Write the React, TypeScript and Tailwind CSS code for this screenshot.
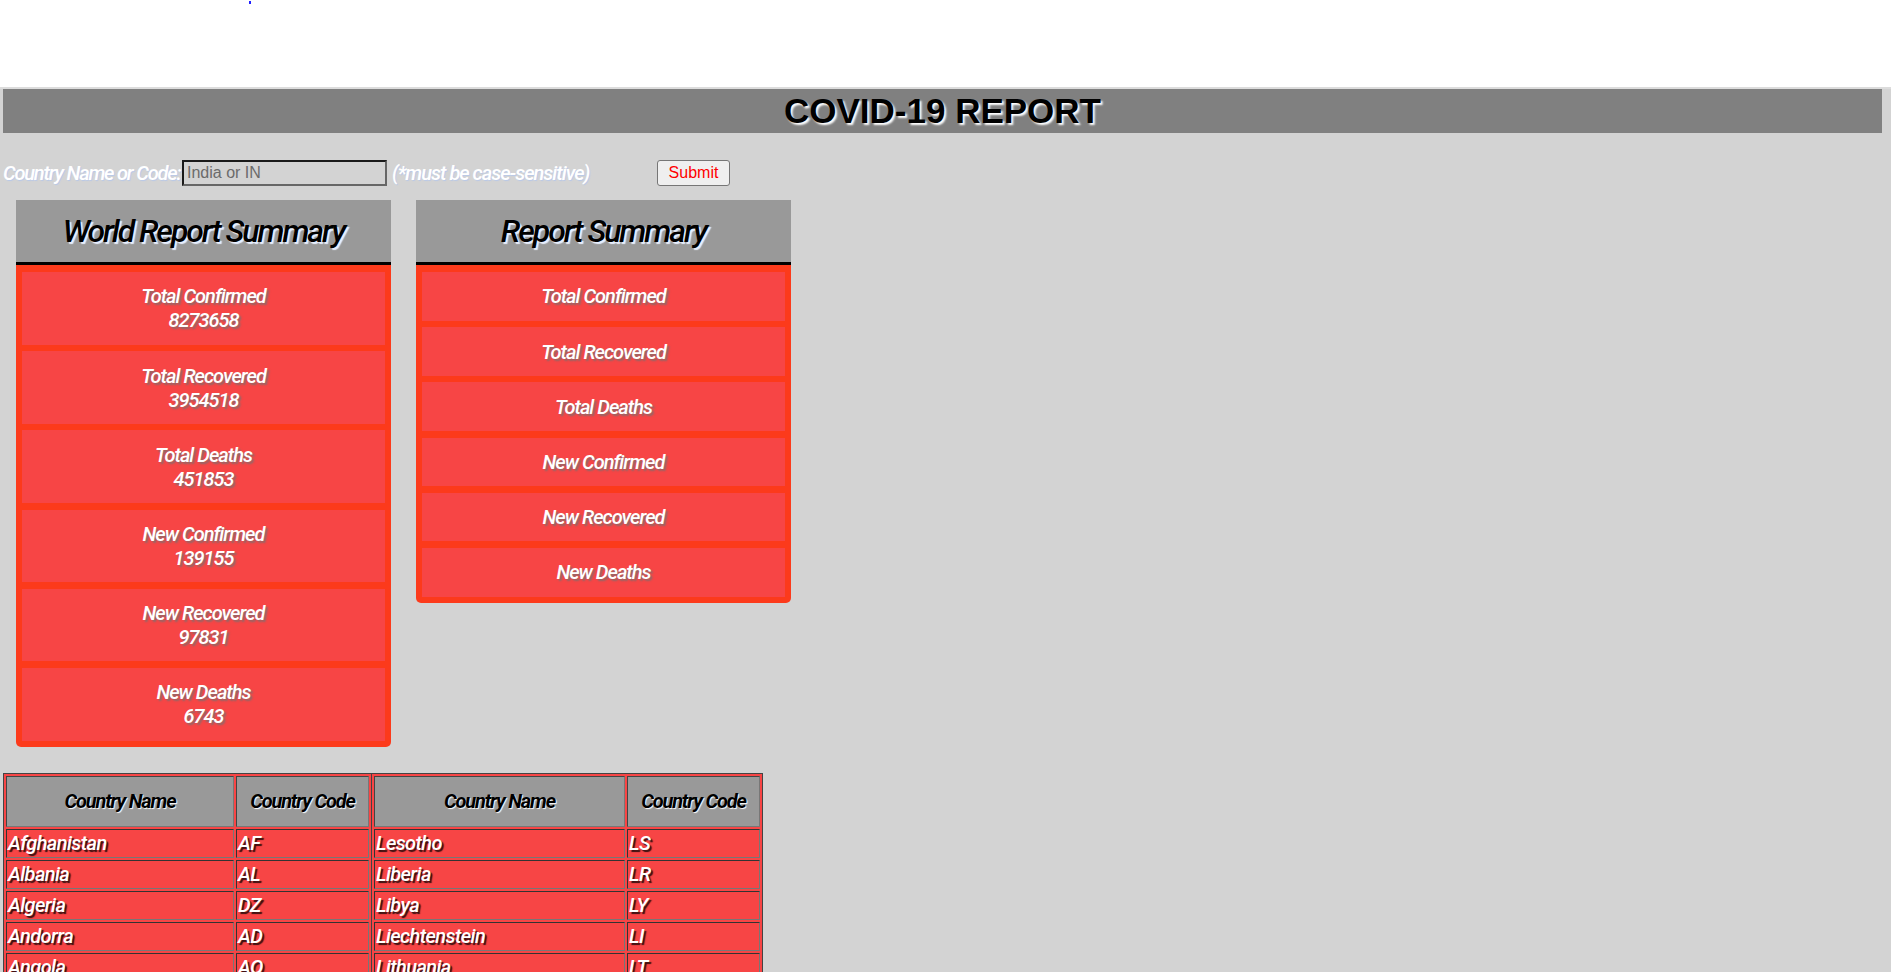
import React from 'react'

const WORLD = [
  { label: 'Total Confirmed', value: '8273658' },
  { label: 'Total Recovered', value: '3954518' },
  { label: 'Total Deaths', value: '451853' },
  { label: 'New Confirmed', value: '139155' },
  { label: 'New Recovered', value: '97831' },
  { label: 'New Deaths', value: '6743' },
]

const LEFT = [
  ['Afghanistan', 'AF'],
  ['Albania', 'AL'],
  ['Algeria', 'DZ'],
  ['Andorra', 'AD'],
  ['Angola', 'AO'],
  ['Antigua and Barbuda', 'AG'],
  ['Argentina', 'AR'],
  ['Armenia', 'AM'],
]

const RIGHT = [
  ['Lesotho', 'LS'],
  ['Liberia', 'LR'],
  ['Libya', 'LY'],
  ['Liechtenstein', 'LI'],
  ['Lithuania', 'LT'],
  ['Luxembourg', 'LU'],
  ['Macedonia', 'MK'],
  ['Madagascar', 'MG'],
]

function SummaryCard({ title, items }: { title: string; items: { label: string; value?: string }[] }) {
  return (
    <div className="w-[375px] bg-[#fc3a1b] rounded-b-[5px]">
      <div className="h-[65px] bg-[#999999] border-b-[3px] border-black flex items-center justify-center">
        <h2 className="text-[32px] italic font-medium text-black tracking-[-0.065em] [text-shadow:2px_2px_1px_#e8f0ff]">
          {title}
        </h2>
      </div>
      <div className="flex flex-col gap-[6.4px] p-[6px] pt-[7px]">
        {items.map((it) => (
          <div
            key={it.label}
            className="bg-[#f74545] py-[12.4px] text-center text-white italic font-medium text-[20px] leading-[24px] tracking-[-0.05em] [text-shadow:2px_2px_2px_#8a6a6a]"
          >
            <div>{it.label}</div>
            {it.value && <div>{it.value}</div>}
          </div>
        ))}
      </div>
    </div>
  )
}

function CountryTable({ rows, nameW, last }: { rows: string[][]; nameW: string; last?: boolean }) {
  const head =
    'h-[51px] bg-[#999999] border border-[#444] border-b-[#777] border-r-[#777] text-black italic font-bold text-[20px] tracking-[-0.06em] [text-shadow:1px_1px_1px_#ffffff]'
  const cell =
    'h-[29px] bg-[#f74545] border border-[#333] border-b-[#777] border-r-[#777] px-[1px] text-white italic font-medium text-[20px] leading-[24px] tracking-[-0.03em] [text-shadow:2px_2px_1px_#3a1010]'
  return (
    <table className={`border-separate border-spacing-[2px] ${last ? '' : 'border-r border-[#444]'}`}>
      <thead>
        <tr>
          <th className={`${nameW} ${head}`}>Country Name</th>
          <th className={`w-[133px] ${head}`}>Country Code</th>
        </tr>
      </thead>
      <tbody>
        {rows.map(([name, code]) => (
          <tr key={code}>
            <td className={cell}>{name}</td>
            <td className={cell}>{code}</td>
          </tr>
        ))}
      </tbody>
    </table>
  )
}

export default function App() {
  return (
    <div className="min-h-screen bg-white font-['Roboto',sans-serif]">
      {/* top white strip */}
      <div className="h-[87px] pl-[249px] pt-[1px]">
        <span className="block w-[2px] h-[3px] bg-[#2020ff]" />
      </div>

      <div className="bg-[#d3d3d3] border-t-2 border-[#dcdcdc] min-h-[885px] pb-10">
        {/* Title bar */}
        <div className="ml-[3px] mr-[9px] h-[44px] bg-[#808080] flex items-center justify-center">
          <h1 className="font-['Liberation_Sans',Arial,sans-serif] font-bold text-[35px] text-black [text-shadow:2px_2px_2px_#ffffff]">
            COVID-19 REPORT
          </h1>
        </div>

        {/* Search form */}
        <div className="mt-[27px] h-[26px] flex items-center pl-[3px]">
          <span className="w-[179px] shrink-0 whitespace-nowrap text-white italic font-medium text-[20px] tracking-[-0.06em] [text-shadow:1px_1px_1px_#b8c8e8]">
            Country Name or Code:
          </span>
          <input
            placeholder="India or IN"
            className="w-[205px] h-[26px] shrink-0 bg-transparent border-2 border-t-[#1a1a1a] border-l-[#1a1a1a] border-b-[#666] border-r-[#666] px-[3px] font-['Liberation_Sans',Arial,sans-serif] text-[16px] placeholder:text-[#6b6b6b] outline-none"
          />
          <span className="w-[270px] shrink-0 whitespace-nowrap pl-[5px] text-white italic font-medium text-[20px] tracking-[-0.05em] [text-shadow:1px_1px_1px_#b8c8e8]">
            (*must be case-sensitive)
          </span>
          <button className="w-[73px] h-[26px] shrink-0 bg-[#efefef] border border-[#767676] rounded-[3px] text-[#ff0000] font-['Liberation_Sans',Arial,sans-serif] text-[16px]">
            Submit
          </button>
        </div>

        {/* Summary cards */}
        <div className="mt-[14px] pl-[16px] flex items-start gap-[25px]">
          <SummaryCard title="World Report Summary" items={WORLD} />
          <SummaryCard title="Report Summary" items={WORLD.map((w) => ({ label: w.label }))} />
        </div>

        {/* Country list */}
        <div className="mt-[26px] ml-[3px] inline-flex bg-[#f74545] border border-[#444]">
          <CountryTable rows={LEFT} nameW="w-[228px]" />
          <CountryTable rows={RIGHT} nameW="w-[251px]" last />
        </div>
      </div>
    </div>
  )
}
